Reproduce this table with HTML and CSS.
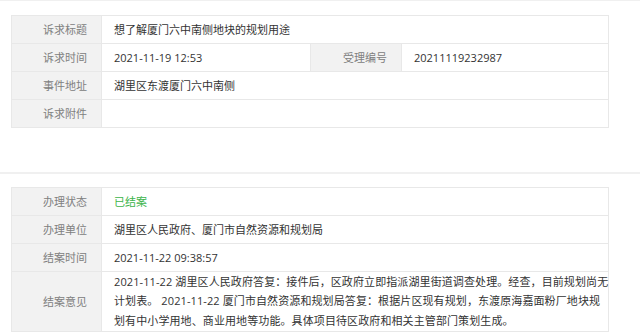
FILE: index.html
```html
<!DOCTYPE html>
<html lang="zh-CN">
<head>
  <meta charset="UTF-8">
  <meta name="viewport" content="width=device-width, initial-scale=1.0">
  <title>诉求详情</title>
  <link rel="stylesheet" href="styles.css">
</head>
<body>
  <div class="top-rule"></div>

  <section class="block">
    <table class="info">
      <colgroup>
        <col class="col-label">
        <col class="col-value">
        <col class="col-label2">
        <col>
      </colgroup>
      <tr>
        <th>诉求标题</th>
        <td colspan="3">想了解厦门六中南侧地块的规划用途</td>
      </tr>
      <tr>
        <th>诉求时间</th>
        <td>2021-11-19 12:53</td>
        <th>受理编号</th>
        <td>20211119232987</td>
      </tr>
      <tr>
        <th>事件地址</th>
        <td colspan="3">湖里区东渡厦门六中南侧</td>
      </tr>
      <tr>
        <th>诉求附件</th>
        <td colspan="3"></td>
      </tr>
    </table>
  </section>

  <div class="divider"></div>

  <section class="block block-second">
    <table class="info">
      <colgroup>
        <col class="col-label">
        <col>
      </colgroup>
      <tr>
        <th>办理状态</th>
        <td class="status-done">已结案</td>
      </tr>
      <tr>
        <th>办理单位</th>
        <td>湖里区人民政府、厦门市自然资源和规划局</td>
      </tr>
      <tr>
        <th>结案时间</th>
        <td>2021-11-22 09:38:57</td>
      </tr>
      <tr>
        <th>结案意见</th>
        <td class="reply">2021-11-22 湖里区人民政府答复：接件后，区政府立即指派湖里街道调查处理。经查，目前规划尚无<br>计划表。 2021-11-22 厦门市自然资源和规划局答复：根据片区现有规划，东渡原海嘉面粉厂地块规<br>划有中小学用地、商业用地等功能。具体项目待区政府和相关主管部门策划生成。</td>
      </tr>
    </table>
  </section>
</body>
</html>
```

FILE: styles.css
```css
body {
  margin: 0;
  font-family: "Open Sans", "Noto Sans CJK SC", sans-serif;
  font-size: 11px;
  color: #333;
  background-color: #fff;
}
.top-rule {
  border-top: 1px solid #f0f0f0;
}
.block {
  padding: 14px 31px 44px 11px;
}
.block-second {
  padding-top: 13px;
  padding-bottom: 0;
}
.divider {
  height: 2px;
  background-color: #f0f0f0;
}
.info {
  width: 598px;
  border-collapse: collapse;
  table-layout: fixed;
}
.col-label { width: 90px; }
.col-value { width: 209px; }
.col-label2 { width: 91px; }
.info th,
.info td {
  border: 1px solid #e8e8e8;
  padding: 4px 12px;
  line-height: 19px;
  height: 19px;
}
.info th {
  background-color: #f2f2f2;
  color: #808080;
  font-weight: normal;
  text-align: right;
  padding-right: 14px;
}
.info td {
  text-align: left;
}
.status-done {
  color: #3cb44a;
}
.info td.reply {
  padding: 0 0 1px 12px;
  line-height: 19.3px;
  white-space: nowrap;
  letter-spacing: 0.1px;
}
```
